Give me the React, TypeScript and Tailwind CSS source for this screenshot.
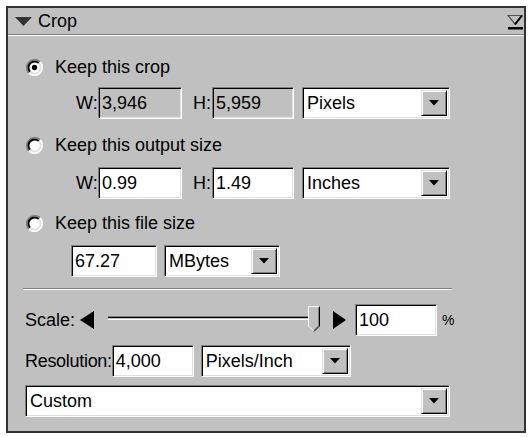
import React from "react";

const sunken =
  "border border-t-[#808080] border-l-[#808080] border-b-white border-r-white shadow-[inset_1px_1px_0_#000,inset_-1px_-1px_0_#dfdfdf]";

function Input({ value, w, disabled }: { value: string; w: string; disabled?: boolean }) {
  return (
    <div
      className={`${sunken} ${w} h-[32px] flex items-center pl-[3px] ${
        disabled ? "bg-[#c0c0c0]" : "bg-white"
      }`}
    >
      {value}
    </div>
  );
}

function DropBtn() {
  return (
    <div className="w-[26px] h-full bg-[#c0c0c0] border border-t-[#dfdfdf] border-l-[#dfdfdf] border-b-black border-r-black shadow-[inset_1px_1px_0_#fff,inset_-1px_-1px_0_#808080] flex items-center justify-center">
      <svg width="10" height="6" viewBox="0 0 10 6">
        <polygon points="0,0 10,0 5,5.5" fill="#000" />
      </svg>
    </div>
  );
}

function Select({ value, w }: { value: string; w: string }) {
  return (
    <div className={`${sunken} ${w} h-[32px] bg-white flex items-stretch p-[2px]`}>
      <div className="flex-1 flex items-center pl-[2px]">{value}</div>
      <DropBtn />
    </div>
  );
}

function Radio({ checked }: { checked?: boolean }) {
  return (
    <svg width="17" height="17" viewBox="0 0 16 16">
      <circle cx="8" cy="8" r="7" fill="#fff" />
      <path d="M13.3 2.7 A7.5 7.5 0 0 0 2.7 13.3" fill="none" stroke="#808080" strokeWidth="1.6" />
      <path d="M12.1 3.9 A5.8 5.8 0 0 0 3.9 12.1" fill="none" stroke="#000" strokeWidth="1.8" />
      <path d="M2.7 13.3 A7.5 7.5 0 0 0 13.3 2.7" fill="none" stroke="#fff" strokeWidth="1.6" />
      <path d="M3.9 12.1 A5.8 5.8 0 0 0 12.1 3.9" fill="none" stroke="#dfdfdf" strokeWidth="1.6" />
      {checked && <circle cx="8" cy="8" r="2.5" fill="#000" />}
    </svg>
  );
}

export default function App() {
  return (
    <div className="w-[531px] h-[437px] bg-white pl-[6px] pt-[6px] font-['Liberation_Sans',Arial,sans-serif] text-[18px] text-black leading-none">
      <div className="w-[520px] h-[427px] border-2 border-[#333] bg-[#c0c0c0] flex flex-col">
        {/* header */}
        <div className="h-[26px] flex items-center pl-[7px] pr-[1px]">
          <svg width="17" height="9" viewBox="0 0 17 9">
            <polygon points="0,0 17,0 8.5,9" fill="#333" />
          </svg>
          <span className="ml-[6px]">Crop</span>
          <div className="flex-1" />
          <svg width="16" height="16" viewBox="0 0 16 16" className="mt-[2px]">
            <polygon points="1,1.5 15,1.5 8,10" fill="#c0c0c0" stroke="#555" strokeWidth="1.2" />
            <line x1="15" y1="1.5" x2="8" y2="10.5" stroke="#000" strokeWidth="2" />
            <rect x="1" y="13" width="15" height="2.5" fill="#000" />
          </svg>
        </div>
        <div className="h-px bg-[#808080]" />
        <div className="h-px bg-white" />

        {/* body */}
        <div className="flex flex-col">
          <div className="mt-[21px] h-[20px] flex items-center pl-[18px]">
            <Radio checked />
            <span className="ml-[12px]">Keep this crop</span>
          </div>
          <div className="mt-[10px] flex items-center pl-[68px]">
            <span className="w-[22px]">W:</span>
            <Input value="3,946" w="w-[84px]" disabled />
            <span className="ml-[11px] w-[19px]">H:</span>
            <Input value="5,959" w="w-[82px]" disabled />
            <div className="ml-[8px]">
              <Select value="Pixels" w="w-[148px]" />
            </div>
          </div>

          <div className="mt-[16px] h-[20px] flex items-center pl-[18px]">
            <Radio />
            <span className="ml-[12px]">Keep this output size</span>
          </div>
          <div className="mt-[12px] flex items-center pl-[68px]">
            <span className="w-[22px]">W:</span>
            <Input value="0.99" w="w-[84px]" />
            <span className="ml-[11px] w-[19px]">H:</span>
            <Input value="1.49" w="w-[82px]" />
            <div className="ml-[8px]">
              <Select value="Inches" w="w-[148px]" />
            </div>
          </div>

          <div className="mt-[14px] h-[20px] flex items-center pl-[18px]">
            <Radio />
            <span className="ml-[12px]">Keep this file size</span>
          </div>
          <div className="mt-[12px] flex items-center pl-[63px]">
            <Input value="67.27" w="w-[86px]" />
            <div className="ml-[7px]">
              <Select value="MBytes" w="w-[116px]" />
            </div>
          </div>

          <div className="mt-[11px] ml-[15px] w-[429px]">
            <div className="h-px bg-[#808080]" />
            <div className="h-px bg-white" />
          </div>

          {/* scale */}
          <div className="mt-[14px] flex items-center pl-[17px]">
            <span className="w-[55px]">Scale:</span>
            <svg width="14" height="18" viewBox="0 0 14 18">
              <polygon points="14,0 0,9 14,18" fill="#000" />
            </svg>
            <div className="ml-[14px] w-[212px] relative h-[32px] flex items-center">
              <div className="w-full h-[4px] border-t border-t-[#808080] border-b border-b-white shadow-[inset_0_1px_0_#000] bg-[#c0c0c0] mt-[-4px]" />
              <svg
                width="12"
                height="26"
                viewBox="0 0 12 26"
                className="absolute right-[0px] top-[2px]"
              >
                <polygon points="0,0 12,0 12,20 6,26 0,20" fill="#c0c0c0" />
                <polyline points="0.5,20 0.5,0.5 11.5,0.5" fill="none" stroke="#fff" />
                <polyline points="0.5,20 6,25.5" fill="none" stroke="#fff" />
                <polyline points="11.5,0.5 11.5,20 6,25.5" fill="none" stroke="#000" />
                <polyline points="10.5,1.5 10.5,19.5 6,24" fill="none" stroke="#808080" />
              </svg>
            </div>
            <svg width="13" height="18" viewBox="0 0 13 18" className="ml-[13px]">
              <polygon points="0,0 13,9 0,18" fill="#000" />
            </svg>
            <div className="ml-[9px]">
              <Input value="100" w="w-[82px]" />
            </div>
            <span className="ml-[5px] text-[14px]">%</span>
          </div>

          {/* resolution */}
          <div className="mt-[9px] flex items-center pl-[17px]">
            <span className="tracking-[-0.3px]">Resolution:</span>
            <Input value="4,000" w="w-[82px]" />
            <div className="ml-[7px]">
              <Select value="Pixels/Inch" w="w-[150px]" />
            </div>
          </div>

          <div className="mt-[8px] ml-[17px]">
            <Select value="Custom" w="w-[425px]" />
          </div>
        </div>
      </div>
    </div>
  );
}
